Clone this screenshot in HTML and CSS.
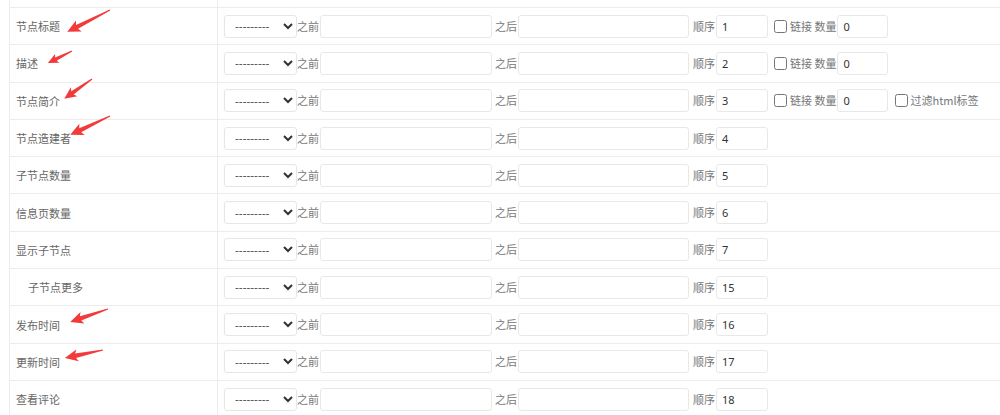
FILE: index.html
```html
<!DOCTYPE html>
<html lang="zh-CN">
<head>
<meta charset="utf-8">
<title>节点字段设置</title>
<link rel="stylesheet" href="styles.css">
</head>
<body>
<div class="sheet">
  <div class="row">
    <div class="label"></div>
    <div class="fields"><input class="inp prev" type="text"></div>
  </div>
  <div class="row">
    <div class="label">节点标题</div>
    <div class="fields">
      <select class="sel"><option>---------</option></select><span class="t">之前</span><input class="inp before" type="text"><span class="t gap">之后</span><input class="inp after" type="text"><span class="t gap2">顺序</span><input class="inp order" type="text" value="1"><input class="cb" type="checkbox"><span class="t">链接 数量</span><input class="inp count" type="text" value="0">
    </div>
  </div>
  <div class="row">
    <div class="label">描述</div>
    <div class="fields">
      <select class="sel"><option>---------</option></select><span class="t">之前</span><input class="inp before" type="text"><span class="t gap">之后</span><input class="inp after" type="text"><span class="t gap2">顺序</span><input class="inp order" type="text" value="2"><input class="cb" type="checkbox"><span class="t">链接 数量</span><input class="inp count" type="text" value="0">
    </div>
  </div>
  <div class="row">
    <div class="label">节点简介</div>
    <div class="fields">
      <select class="sel"><option>---------</option></select><span class="t">之前</span><input class="inp before" type="text"><span class="t gap">之后</span><input class="inp after" type="text"><span class="t gap2">顺序</span><input class="inp order" type="text" value="3"><input class="cb" type="checkbox"><span class="t">链接 数量</span><input class="inp count" type="text" value="0"><input class="cb cb2" type="checkbox"><span class="t">过滤html标签</span>
    </div>
  </div>
  <div class="row">
    <div class="label">节点造建者</div>
    <div class="fields">
      <select class="sel"><option>---------</option></select><span class="t">之前</span><input class="inp before" type="text"><span class="t gap">之后</span><input class="inp after" type="text"><span class="t gap2">顺序</span><input class="inp order" type="text" value="4">
    </div>
  </div>
  <div class="row">
    <div class="label">子节点数量</div>
    <div class="fields">
      <select class="sel"><option>---------</option></select><span class="t">之前</span><input class="inp before" type="text"><span class="t gap">之后</span><input class="inp after" type="text"><span class="t gap2">顺序</span><input class="inp order" type="text" value="5">
    </div>
  </div>
  <div class="row">
    <div class="label">信息页数量</div>
    <div class="fields">
      <select class="sel"><option>---------</option></select><span class="t">之前</span><input class="inp before" type="text"><span class="t gap">之后</span><input class="inp after" type="text"><span class="t gap2">顺序</span><input class="inp order" type="text" value="6">
    </div>
  </div>
  <div class="row">
    <div class="label">显示子节点</div>
    <div class="fields">
      <select class="sel"><option>---------</option></select><span class="t">之前</span><input class="inp before" type="text"><span class="t gap">之后</span><input class="inp after" type="text"><span class="t gap2">顺序</span><input class="inp order" type="text" value="7">
    </div>
  </div>
  <div class="row">
    <div class="label sub">子节点更多</div>
    <div class="fields">
      <select class="sel"><option>---------</option></select><span class="t">之前</span><input class="inp before" type="text"><span class="t gap">之后</span><input class="inp after" type="text"><span class="t gap2">顺序</span><input class="inp order" type="text" value="15">
    </div>
  </div>
  <div class="row">
    <div class="label">发布时间</div>
    <div class="fields">
      <select class="sel"><option>---------</option></select><span class="t">之前</span><input class="inp before" type="text"><span class="t gap">之后</span><input class="inp after" type="text"><span class="t gap2">顺序</span><input class="inp order" type="text" value="16">
    </div>
  </div>
  <div class="row">
    <div class="label">更新时间</div>
    <div class="fields">
      <select class="sel"><option>---------</option></select><span class="t">之前</span><input class="inp before" type="text"><span class="t gap">之后</span><input class="inp after" type="text"><span class="t gap2">顺序</span><input class="inp order" type="text" value="17">
    </div>
  </div>
  <div class="row">
    <div class="label">查看评论</div>
    <div class="fields">
      <select class="sel"><option>---------</option></select><span class="t">之前</span><input class="inp before" type="text"><span class="t gap">之后</span><input class="inp after" type="text"><span class="t gap2">顺序</span><input class="inp order" type="text" value="18">
    </div>
  </div>
</div>

<svg class="arrows" width="1000" height="415" viewBox="0 0 1000 415">
  <g fill="#f23a3a">
    <polygon transform="translate(110,10) rotate(152.9)" points="0,-0.6 37,-2.2 35,-6.2 48,0 35,6.2 37,2.2 0,0.6"/>
    <polygon transform="translate(72,51) rotate(153.4)" points="0,-0.5 18,-1.8 16.5,-4.8 27,0 16.5,4.8 18,1.8 0,0.5"/>
    <polygon transform="translate(92,79) rotate(144.5)" points="0,-0.6 24,-2 22,-5.6 34,0 22,5.6 24,2 0,0.6"/>
    <polygon transform="translate(110,116) rotate(154.6)" points="0,-0.6 33,-2.2 31,-6.2 44,0 31,6.2 33,2.2 0,0.6"/>
    <polygon transform="translate(108,309) rotate(161.1)" points="0,-0.6 29,-2.2 27,-6 40,0 27,6 29,2.2 0,0.6"/>
    <polygon transform="translate(103,350) rotate(168.1)" points="0,-0.6 28,-2.2 26,-6 39,0 26,6 28,2.2 0,0.6"/>
  </g>
</svg>
</body>
</html>
```

FILE: styles.css
```css
html, body {
  margin: 0;
  padding: 0;
  background: #fff;
}

body {
  font-family: "Noto Sans CJK SC", "Microsoft YaHei", "Noto Sans", sans-serif;
  font-size: 11px;
  color: #666;
  overflow: hidden;
  width: 1000px;
  height: 415px;
  position: relative;
}

.sheet {
  margin-top: -30.3px;
  margin-left: 9px;
  border-left: 1px solid #ececec;
}

.row {
  display: flex;
  height: 37.3px;
  box-sizing: border-box;
  border-top: 1px solid #ececec;
}

.label {
  width: 208px;
  flex: none;
  box-sizing: border-box;
  border-right: 1px solid #ececec;
  display: flex;
  align-items: center;
  padding-left: 6px;
  color: #666;
}

.label.sub {
  padding-left: 18px;
}

.fields {
  display: flex;
  align-items: center;
  padding-left: 6px;
  white-space: nowrap;
}

.t {
  color: #777;
  line-height: 1;
}

.gap { margin-left: 3px; }
.gap2 { margin-left: 4px; }

.sel {
  width: 73px;
  height: 23px;
  box-sizing: border-box;
  border: 1px solid #e6e6e6;
  border-radius: 3px;
  background: #fff;
  color: #333;
  font-family: inherit;
  font-size: 11px;
  padding: 0 0 0 6px;
  margin: 0;
}

.inp {
  height: 23px;
  box-sizing: border-box;
  border: 1px solid #e8e8e8;
  border-radius: 3px;
  background: #fff;
  color: #333;
  font-family: "Noto Sans", "Noto Sans CJK SC", sans-serif;
  font-size: 11px;
  padding: 0 5px;
  margin: 0 0 0 1px;
  outline: none;
}

.inp.prev {
  width: 146px;
  margin-left: 91px;
}

.inp.before { width: 172px; }
.inp.after { width: 171px; }
.inp.order { width: 52px; }
.inp.count { width: 51px; }

.cb {
  width: 13px;
  height: 13px;
  margin: 0 3px 0 6px;
  flex: none;
}

.cb2 {
  margin-left: 7px;
  margin-right: 2px;
}

.arrows {
  position: absolute;
  left: 0;
  top: 0;
  pointer-events: none;
}
```
